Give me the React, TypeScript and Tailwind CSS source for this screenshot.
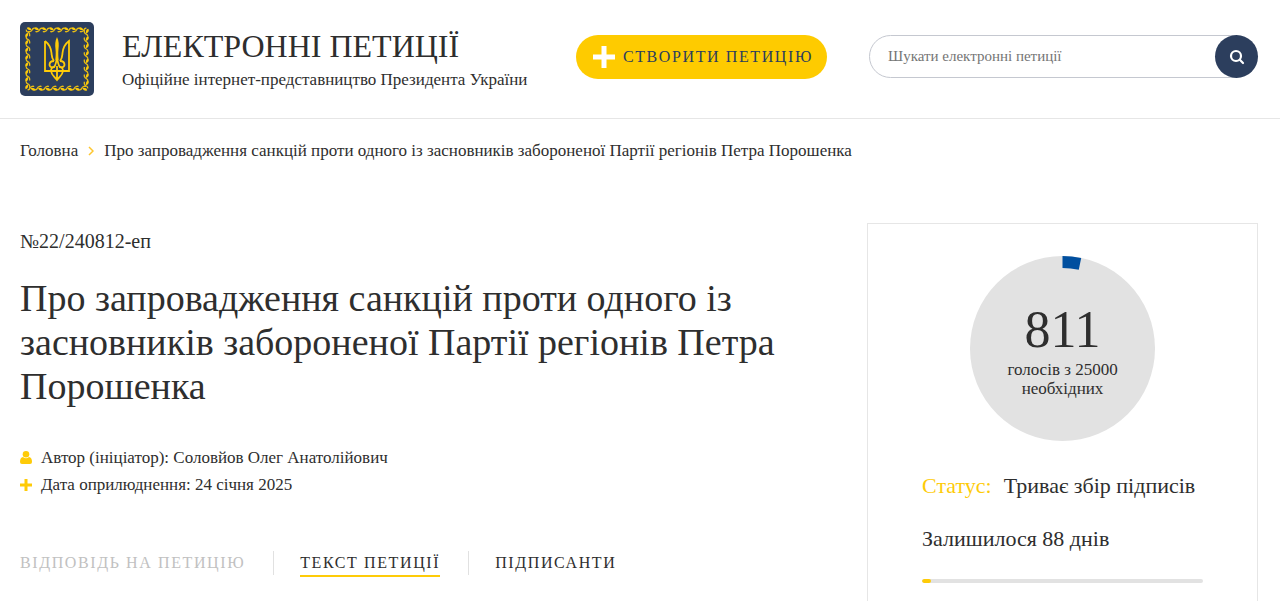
const VOTES = 811
const VOTES_NEEDED = 25000
const DAYS_TOTAL = 91
const DAYS_LEFT = 88

const Ornament = () => {
    const steps = Array.from({ length: 8 }, (_, i) => 10 + i * 7.4)
    return (
        <g>
            {[0, 90, 180, 270].map((angle) => (
                <g key={angle} transform={`rotate(${angle} 37 37)`}>
                    {steps.map((x) => (
                        <g key={x} transform={`translate(${x} 7.5)`}>
                            <path
                                d="M-3.200 -1.800C-1.500 -3 0.800 -2 1.500 0.500C-0.500 1 -2.800 0.300 -3.200 -1.800Z"
                                fill="#fecb08"
                            />
                            <path
                                d="M-2 2C-0.500 2.600 1.500 2 2.200 0.200C2.600 -0.800 3.400 -1.400 4.600 -1.200"
                                fill="none"
                                stroke="#e8bd15"
                                strokeWidth="1.300"
                            />
                        </g>
                    ))}
                </g>
            ))}
        </g>
    )
}

const Logo = () => {
    return (
        <svg
            viewBox="0 0 74 74"
            className="size-[74px] shrink-0"
            aria-hidden="true"
        >
            <rect width="74" height="74" rx="5" fill="#2c3e5d" />
            <Ornament />
            <g fill="none" stroke="#fecb08" strokeWidth="1.800">
                <path d="M34 39C31 39 29.500 41 29.500 43C30 45 32 46 34 45C36 43 36.600 39 37 34C37.400 39 38 43 40 45C42 46 44 45 44.500 43C44.500 41 43 39 40 39" />
                <path d="M25 19V49H49V19C45 22 43 26 42.500 31C42.200 34 42.500 36 40 39M25 19C29 22 31 26 31.500 31C31.800 34 31.500 36 34 39" />
                <path d="M31 49C31 46 33 44.500 35 45M43 49C43 46 41 44.500 39 45M31 49C31.500 53 34 54 37 58C40 54 42.500 53 43 49M37 44V57" />
            </g>
            <path
                d="M37 15C39 19 39 23 38.500 27C38 31 38.500 35 38.500 38H35.500C35.500 35 36 31 35.500 27C35 23 35 19 37 15Z"
                fill="#fecb08"
            />
        </svg>
    )
}

const Header = () => {
    return (
        <header className="border-b border-[#e6e6e6]">
            <div className="flex items-start pt-[22px] pr-[22px] pb-[22px] pl-5">
                <a
                    href="#"
                    className="flex flex-1 gap-7"
                    aria-label="Електронні петиції"
                >
                    <Logo />
                    <span className="flex flex-col whitespace-nowrap">
                        <span className="pt-1 text-[32px] leading-10">
                            ЕЛЕКТРОННІ ПЕТИЦІЇ
                        </span>
                        <span className="pt-1 text-[17px] leading-5">
                            Офіційне інтернет-представництво Президента України
                        </span>
                    </span>
                </a>
                <button
                    type="button"
                    className="mt-[13px] mr-[42px] flex h-11 shrink-0 items-center gap-2 rounded-full bg-[#fecb00] pr-[14px] pl-[17px] text-base tracking-widest whitespace-nowrap text-[#2c3e5d]"
                >
                    <svg
                        viewBox="0 0 22 22"
                        className="size-[22px]"
                        aria-hidden="true"
                    >
                        <path d="M8.500 0H13.500V8.500H22V13.500H13.500V22H8.500V13.500H0V8.500H8.500Z" fill="#fff" />
                    </svg>
                    СТВОРИТИ ПЕТИЦІЮ
                </button>
                <form
                    className="mt-[13px] flex h-[43px] w-[389px] shrink-0"
                    onSubmit={(e) => e.preventDefault()}
                >
                    <input
                        type="text"
                        aria-label="Шукати електронні петиції"
                        placeholder="Шукати електронні петиції"
                        className="-mr-[22px] min-w-0 flex-1 rounded-l-full border border-[#c5c8d0] pl-[18px] text-[15px] outline-none placeholder:text-[#757575]"
                    />
                    <button
                        type="submit"
                        aria-label="Шукати"
                        className="flex size-[43px] items-center justify-center rounded-full bg-[#2c3e5d]"
                    >
                        <svg
                            viewBox="0 0 16 16"
                            className="size-4"
                            fill="none"
                            stroke="#fff"
                            strokeWidth="2.200"
                            strokeLinecap="round"
                            aria-hidden="true"
                        >
                            <circle cx="7" cy="7" r="5" />
                            <path d="M10.800 10.800L14 14" />
                        </svg>
                    </button>
                </form>
            </div>
        </header>
    )
}

const Breadcrumbs = () => {
    return (
        <nav className="flex items-center px-5 pt-5 text-[17px] leading-6">
            <a href="#">Головна</a>
            <svg
                viewBox="0 0 6 10"
                className="mx-[10px] h-[10px] w-[6px]"
                fill="none"
                stroke="#fdc62f"
                strokeWidth="1.5"
                aria-hidden="true"
            >
                <path d="M1 1L5 5L1 9" />
            </svg>
            <span>
                Про запровадження санкцій проти одного із засновників
                забороненої Партії регіонів Петра Порошенка
            </span>
        </nav>
    )
}

const Tabs = () => {
    return (
        <div className="mt-[53px] flex items-start text-base tracking-widest whitespace-nowrap">
            <button type="button" className="text-[#c1c1c1]" disabled>
                ВІДПОВІДЬ НА ПЕТИЦІЮ
            </button>
            <span className="mr-[26px] ml-7 h-6 w-px bg-[#e1e1e1]" />
            <button type="button" className="border-b-2 border-[#fecb08]">
                ТЕКСТ ПЕТИЦІЇ
            </button>
            <span className="mr-[26px] ml-7 h-6 w-px bg-[#e1e1e1]" />
            <button type="button">ПІДПИСАНТИ</button>
        </div>
    )
}

const Petition = () => {
    return (
        <main className="min-w-0 flex-1">
            <p className="pt-[6px] text-xl leading-6">№22/240812-еп</p>
            <h1 className="mt-[23px] text-[38px] leading-[44px]">
                Про запровадження санкцій проти одного із засновників
                забороненої Партії регіонів Петра Порошенка
            </h1>
            <div className="mt-9 flex flex-col text-[17px] leading-[27px]">
                <p className="flex items-center gap-[9px]">
                    <svg
                        viewBox="0 0 12 13"
                        className="h-[13px] w-3"
                        fill="#fecb08"
                        aria-hidden="true"
                    >
                        <circle cx="6" cy="3.300" r="3.300" />
                        <path d="M3 6Q6 8.500 9 6Q12 6.500 12 11Q12 13 10 13H2Q0 13 0 11Q0 6.500 3 6Z" />
                    </svg>
                    Автор (ініціатор): Соловйов Олег Анатолійович
                </p>
                <p className="flex items-center gap-[9px]">
                    <svg
                        viewBox="0 0 12 12"
                        className="size-3"
                        fill="#fecb08"
                        aria-hidden="true"
                    >
                        <path d="M4.500 0H7.500V4.500H12V7.500H7.500V12H4.500V7.500H0V4.500H4.500Z" />
                    </svg>
                    Дата оприлюднення: 24 січня 2025
                </p>
            </div>
            <Tabs />
        </main>
    )
}

const VotesCircle = () => {
    const radius = 86.5
    const length = 2 * Math.PI * radius
    const filled = (length * VOTES) / VOTES_NEEDED
    return (
        <div className="grid size-[185px] place-items-center self-center">
            <svg
                viewBox="0 0 185 185"
                className="col-start-1 row-start-1 size-full"
                aria-hidden="true"
            >
                <circle cx="92.500" cy="92.500" r="92.500" fill="#e2e2e2" />
                <circle
                    cx="92.500"
                    cy="92.500"
                    r={radius}
                    fill="none"
                    stroke="#004f9f"
                    strokeWidth="12"
                    strokeDasharray={`${filled} ${length}`}
                    transform="rotate(-90 92.500 92.500)"
                />
            </svg>
            <div className="col-start-1 row-start-1 flex flex-col items-center text-center">
                <span className="text-[52px] leading-[60px]">{VOTES}</span>
                <span className="text-[17px] leading-[19px]">
                    голосів з {VOTES_NEEDED}
                    <br />
                    необхідних
                </span>
            </div>
        </div>
    )
}

const Sidebar = () => {
    return (
        <aside className="flex w-[391px] shrink-0 flex-col border border-[#e6e6e6] px-[54px] pt-8 pb-10 text-[22px] leading-7">
            <VotesCircle />
            <p className="mt-[31px] flex gap-3 whitespace-nowrap">
                <span className="text-[#fecb08]">Статус:</span>
                <span>Триває збір підписів</span>
            </p>
            <p className="mt-[25px]">Залишилося {DAYS_LEFT} днів</p>
            <div className="mt-[26px] h-1 overflow-hidden rounded-full bg-[#e2e2e2]">
                <div
                    className="h-full rounded-full bg-[#fecb08]"
                    style={{
                        width: `${((DAYS_TOTAL - DAYS_LEFT) / DAYS_TOTAL) * 100}%`,
                    }}
                />
            </div>
        </aside>
    )
}

const App = () => {
    return (
        <div className="h-screen overflow-hidden bg-white font-[Georgia,'Liberation_Serif',serif] text-[#2e2e2e]">
            <Header />
            <Breadcrumbs />
            <div className="flex items-start gap-12 pt-[60px] pr-[22px] pl-5">
                <Petition />
                <Sidebar />
            </div>
        </div>
    )
}

export default App
